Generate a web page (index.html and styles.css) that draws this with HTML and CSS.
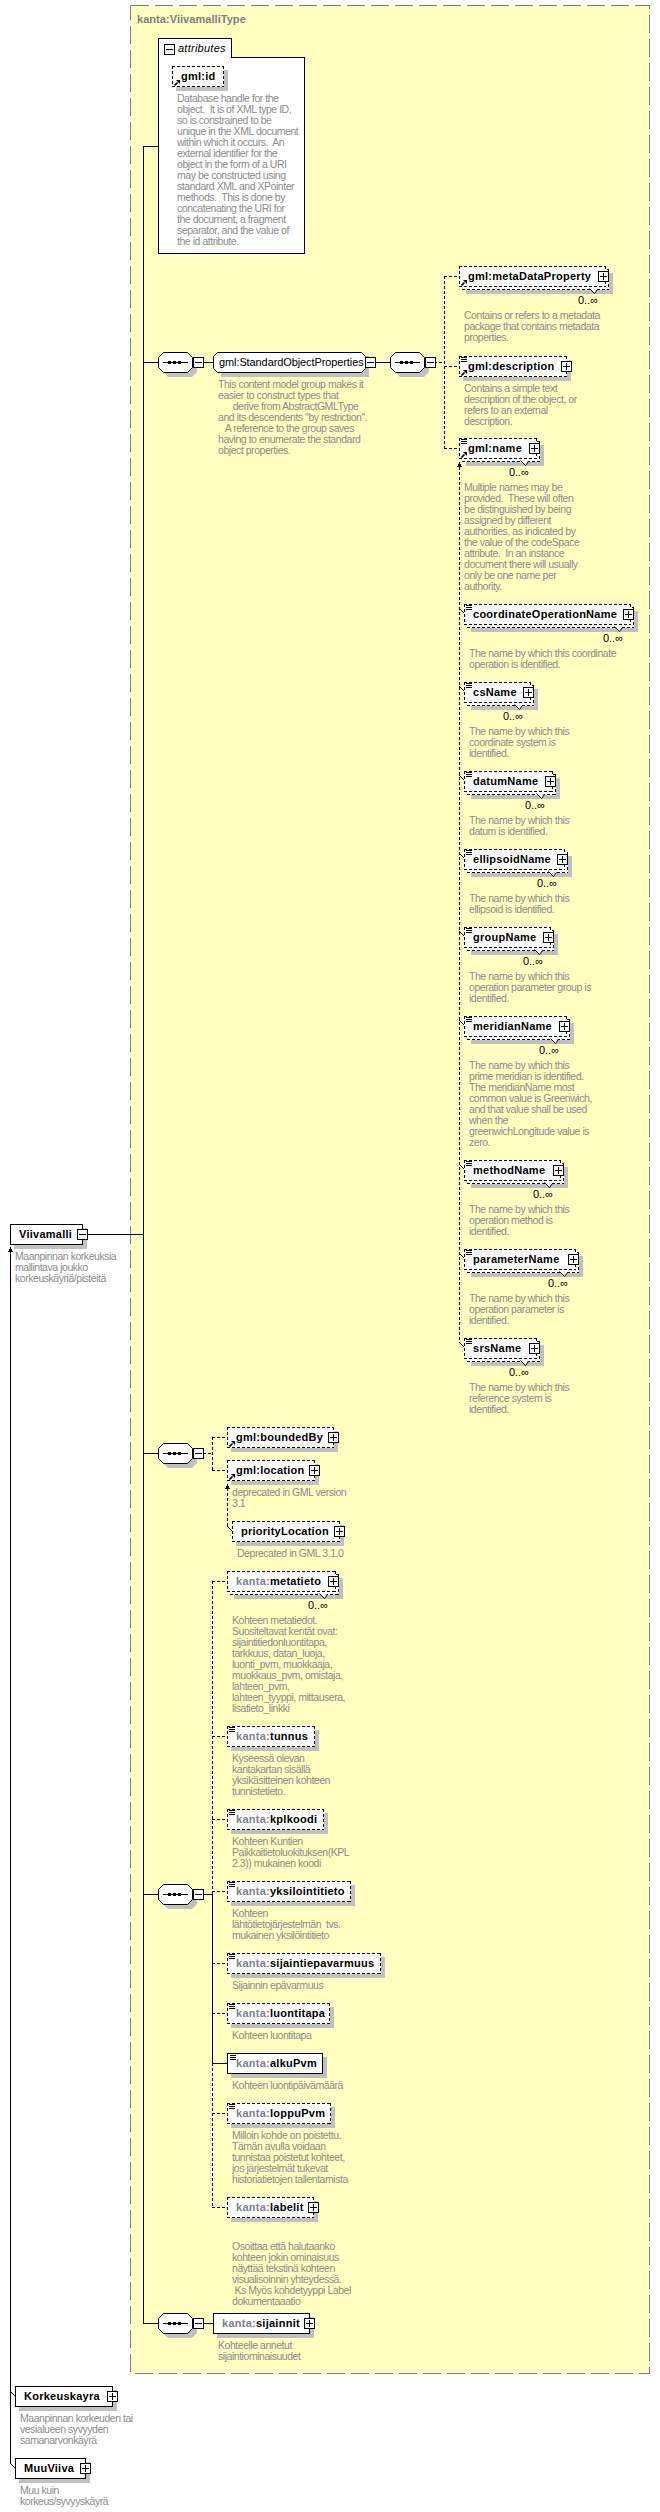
FILE: index.html
```html
<!DOCTYPE html>
<html lang="en">
<head>
<meta charset="utf-8">
<title>Viivamalli schema diagram</title>
<link rel="stylesheet" href="styles.css">
</head>
<body>
<svg class="defs" width="0" height="0" aria-hidden="true">
  <symbol id="oct" viewBox="0 0 40 26">
    <polygon class="oct-shadow" points="10,5 34,5 39,10 39,20 34,25 10,25 5,20 5,10"/>
    <polygon class="oct-face" points="5.5,0.5 29.5,0.5 34.5,5.5 34.5,15.5 29.5,20.5 5.5,20.5 0.5,15.5 0.5,5.5"/>
    <path class="oct-line" d="M5 10.5H30"/>
    <path class="oct-dots" d="M10 9h3v3h-3zM15 9h3v3h-3zM20 9h3v3h-3z"/>
  </symbol>
  <symbol id="link" viewBox="0 0 6 6">
    <path class="ico" d="M2 0H6V4Z"/>
    <path class="ico-line" d="M0.5 5.5L3.5 2.5"/>
  </symbol>
  <symbol id="tick" viewBox="0 0 9 6">
    <path class="tick-shape" d="M0.5 0.5L5.5 5.5L8.5 1.5"/>
  </symbol>
</svg>

<main class="canvas">
  <svg class="wires" width="660" height="2512" viewBox="0 0 660 2512" aria-hidden="true">
    <rect class="frame" x="130.5" y="5.5" width="519" height="2368"/>
    <path class="wire" d="M143.5 146V2323.5M143 146.5H158M87 1234.5H143M143 362.5H158M143 1453.5H158M143 1894.5H158M143 2323.5H158M203 362.5H213M376 362.5H390M203 2323.5H213M203 1894.5H212.5M212.5 1894V2063.5H227M10.5 1252V2463"/>
    <path class="wire" d="M10 2391L15 2396M10 2463L15 2468"/>
    <path class="wire-d" d="M434 362.5H444.5M444.5 276V448M444 276.5H459M444 366.5H459M444 448.5H459"/>
    <path class="wire-d" d="M459.5 467V1342"/>
    <path class="wire" d="M459 608L464 613M459 686L464 691M459 775L464 780M459 853L464 858M459 931L464 936M459 1020L464 1025M459 1164L464 1169M459 1253L464 1258M459 1342L464 1347"/>
    <path class="wire-d" d="M203 1453.5H212.5M212.5 1437V1470M212 1437.5H227M212 1470.5H227"/>
    <path class="wire-d" d="M227.5 1488V1526"/>
    <path class="wire" d="M227 1526L232 1531"/>
    <path class="wire-d" d="M212.5 1581V1894M212.5 2063V2207M212 1581.5H227M212 1736.5H227M212 1819.5H227M212 1891.5H227M212 1963.5H227M212 2013.5H227M212 2113.5H227M212 2207.5H227"/>
    <polygon class="head" points="10.5,1247 13,1252 8,1252"/>
    <polygon class="head" points="459.5,462 462,467 457,467"/>
    <polygon class="head" points="227.5,1484 230,1489 225,1489"/>
  </svg>

  <h1 class="type-name">kanta:ViivamalliType</h1>

  <section class="attrs">
    <div class="attrs-tab"><span class="minus static"></span><span class="attrs-label">attributes</span></div>
    <div class="attrs-body"></div>
  </section>

  <article class="item i-id">
    <div class="node"><div class="face dash">gml:id<svg class="link"><use href="#link"/></svg></div></div>
    <p class="desc">Database handle for the<br>object.  It is of XML type ID,<br>so is constrained to be<br>unique in the XML document<br>within which it occurs.  An<br>external identifier for the<br>object in the form of a URI<br>may be constructed using<br>standard XML and XPointer<br>methods.  This is done by<br>concatenating the URI for<br>the document, a fragment<br>separator, and the value of<br>the id attribute.</p>
  </article>

  <div class="seq s1"><svg class="oct"><use href="#oct"/></svg><span class="minus"></span></div>

  <article class="item i-group">
    <div class="group">
      <svg class="group-shape" width="158" height="26" viewBox="0 0 158 26">
        <polygon class="oct-shadow" points="8,4 156,4 156,25 8,25"/>
        <polygon class="oct-face" points="4.5,0.5 148.5,0.5 152.5,4.5 152.5,16.5 148.5,20.5 4.5,20.5 0.5,16.5 0.5,4.5"/>
      </svg>
      <span class="group-name">gml:StandardObjectProperties</span>
      <span class="minus"></span>
    </div>
    <p class="desc">This content model group makes it<br>easier to construct types that<br>      derive from AbstractGMLType<br>and its descendents "by restriction".<br>   A reference to the group saves<br>having to enumerate the standard<br>object properties.</p>
  </article>

  <div class="seq s2"><svg class="oct"><use href="#oct"/></svg><span class="minus"></span></div>

  <article class="item i-meta">
    <div class="node multi"><div class="face dash">gml:metaDataProperty<svg class="link"><use href="#link"/></svg></div><svg class="tick"><use href="#tick"/></svg><span class="plus"></span><span class="occurs">0..∞</span></div>
    <p class="desc">Contains or refers to a metadata<br>package that contains metadata<br>properties.</p>
  </article>

  <article class="item i-description">
    <div class="node"><div class="face dash">gml:description<i class="lines"></i><svg class="link"><use href="#link"/></svg></div><span class="plus"></span></div>
    <p class="desc">Contains a simple text<br>description of the object, or<br>refers to an external<br>description.</p>
  </article>

  <article class="item i-name">
    <div class="node multi"><div class="face dash">gml:name<i class="lines"></i><svg class="link"><use href="#link"/></svg></div><svg class="tick"><use href="#tick"/></svg><span class="plus"></span><span class="occurs">0..∞</span></div>
    <p class="desc">Multiple names may be<br>provided.  These will often<br>be distinguished by being<br>assigned by different<br>authorities, as indicated by<br>the value of the codeSpace<br>attribute.  In an instance<br>document there will usually<br>only be one name per<br>authority.</p>
  </article>

  <article class="item i-coord">
    <div class="node multi"><div class="face dash">coordinateOperationName<i class="lines"></i></div><svg class="tick"><use href="#tick"/></svg><span class="plus"></span><span class="occurs">0..∞</span></div>
    <p class="desc">The name by which this coordinate<br>operation is identified.</p>
  </article>

  <article class="item i-cs">
    <div class="node multi"><div class="face dash">csName<i class="lines"></i></div><svg class="tick"><use href="#tick"/></svg><span class="plus"></span><span class="occurs">0..∞</span></div>
    <p class="desc">The name by which this<br>coordinate system is<br>identified.</p>
  </article>

  <article class="item i-datum">
    <div class="node multi"><div class="face dash">datumName<i class="lines"></i></div><svg class="tick"><use href="#tick"/></svg><span class="plus"></span><span class="occurs">0..∞</span></div>
    <p class="desc">The name by which this<br>datum is identified.</p>
  </article>

  <article class="item i-ellipsoid">
    <div class="node multi"><div class="face dash">ellipsoidName<i class="lines"></i></div><svg class="tick"><use href="#tick"/></svg><span class="plus"></span><span class="occurs">0..∞</span></div>
    <p class="desc">The name by which this<br>ellipsoid is identified.</p>
  </article>

  <article class="item i-groupname">
    <div class="node multi"><div class="face dash">groupName<i class="lines"></i></div><svg class="tick"><use href="#tick"/></svg><span class="plus"></span><span class="occurs">0..∞</span></div>
    <p class="desc">The name by which this<br>operation parameter group is<br>identified.</p>
  </article>

  <article class="item i-meridian">
    <div class="node multi"><div class="face dash">meridianName<i class="lines"></i></div><svg class="tick"><use href="#tick"/></svg><span class="plus"></span><span class="occurs">0..∞</span></div>
    <p class="desc">The name by which this<br>prime meridian is identified.<br>The meridianName most<br>common value is Greenwich,<br>and that value shall be used<br>when the<br>greenwichLongitude value is<br>zero.</p>
  </article>

  <article class="item i-method">
    <div class="node multi"><div class="face dash">methodName<i class="lines"></i></div><svg class="tick"><use href="#tick"/></svg><span class="plus"></span><span class="occurs">0..∞</span></div>
    <p class="desc">The name by which this<br>operation method is<br>identified.</p>
  </article>

  <article class="item i-parameter">
    <div class="node multi"><div class="face dash">parameterName<i class="lines"></i></div><svg class="tick"><use href="#tick"/></svg><span class="plus"></span><span class="occurs">0..∞</span></div>
    <p class="desc">The name by which this<br>operation parameter is<br>identified.</p>
  </article>

  <article class="item i-srs">
    <div class="node multi"><div class="face dash">srsName<i class="lines"></i></div><svg class="tick"><use href="#tick"/></svg><span class="plus"></span><span class="occurs">0..∞</span></div>
    <p class="desc">The name by which this<br>reference system is<br>identified.</p>
  </article>

  <article class="item i-viiva">
    <div class="node"><div class="face solid">Viivamalli</div><span class="minus"></span></div>
    <p class="desc">Maanpinnan korkeuksia<br>mallintava joukko<br>korkeuskäyriä/pisteitä</p>
  </article>

  <div class="seq s3"><svg class="oct"><use href="#oct"/></svg><span class="minus"></span></div>

  <article class="item i-bounded">
    <div class="node"><div class="face dash">gml:boundedBy<svg class="link"><use href="#link"/></svg></div><span class="plus"></span></div>
  </article>

  <article class="item i-location">
    <div class="node"><div class="face dash">gml:location<svg class="link"><use href="#link"/></svg></div><span class="plus"></span></div>
    <p class="desc">deprecated in GML version<br>3.1</p>
  </article>

  <article class="item i-priority">
    <div class="node"><div class="face dash">priorityLocation</div><span class="plus"></span></div>
    <p class="desc">Deprecated in GML 3.1.0</p>
  </article>

  <article class="item i-metatieto">
    <div class="node multi"><div class="face dash"><span class="ns">kanta:</span>metatieto</div><svg class="tick"><use href="#tick"/></svg><span class="plus"></span><span class="occurs">0..∞</span></div>
    <p class="desc">Kohteen metatiedot.<br>Suositeltavat kentät ovat:<br>sijaintitiedonluontitapa,<br>tarkkuus, datan_luoja,<br>luonti_pvm, muokkaaja,<br>muokkaus_pvm, omistaja,<br>lahteen_pvm,<br>lahteen_tyyppi, mittausera,<br>lisatieto_linkki</p>
  </article>

  <article class="item i-tunnus">
    <div class="node"><div class="face dash"><span class="ns">kanta:</span>tunnus<i class="lines"></i></div></div>
    <p class="desc">Kyseessä olevan<br>kantakartan sisällä<br>yksikäsitteinen kohteen<br>tunnistetieto.</p>
  </article>

  <article class="item i-kpl">
    <div class="node"><div class="face dash"><span class="ns">kanta:</span>kplkoodi<i class="lines"></i></div></div>
    <p class="desc">Kohteen Kuntien<br>Paikkaitietoluokituksen(KPL<br>2.3)) mukainen koodi</p>
  </article>

  <div class="seq s4"><svg class="oct"><use href="#oct"/></svg><span class="minus"></span></div>

  <article class="item i-yksi">
    <div class="node"><div class="face dash"><span class="ns">kanta:</span>yksilointitieto<i class="lines"></i></div></div>
    <p class="desc">Kohteen<br>lähtötietojärjestelmän  tvs.<br>mukainen yksilöintitieto</p>
  </article>

  <article class="item i-sijainti">
    <div class="node"><div class="face dash"><span class="ns">kanta:</span>sijaintiepavarmuus<i class="lines"></i></div></div>
    <p class="desc">Sijainnin epävarmuus</p>
  </article>

  <article class="item i-luonti">
    <div class="node"><div class="face dash"><span class="ns">kanta:</span>luontitapa<i class="lines"></i></div></div>
    <p class="desc">Kohteen luontitapa</p>
  </article>

  <article class="item i-alku">
    <div class="node"><div class="face solid"><span class="ns">kanta:</span>alkuPvm<i class="lines"></i></div></div>
    <p class="desc">Kohteen luontipäivämäärä</p>
  </article>

  <article class="item i-loppu">
    <div class="node"><div class="face dash"><span class="ns">kanta:</span>loppuPvm<i class="lines"></i></div></div>
    <p class="desc">Milloin kohde on poistettu.<br>Tämän avulla voidaan<br>tunnistaa poistetut kohteet,<br>jos järjestelmät tukevat<br>historiatietojen tallentamista</p>
  </article>

  <article class="item i-labelit">
    <div class="node"><div class="face dash"><span class="ns">kanta:</span>labelit</div><span class="plus"></span></div>
    <p class="desc low">Osoittaa että halutaanko<br>kohteen jokin ominaisuus<br>näyttää tekstinä kohteen<br>visualisoinnin yhteydessä.<br> Ks Myös kohdetyyppi Label<br>dokumentaaatio</p>
  </article>

  <div class="seq s5"><svg class="oct"><use href="#oct"/></svg><span class="minus"></span></div>

  <article class="item i-sijainnit">
    <div class="node"><div class="face solid"><span class="ns">kanta:</span>sijainnit</div><span class="plus"></span></div>
    <p class="desc">Kohteelle annetut<br>sijaintiominaisuudet</p>
  </article>

  <article class="item i-korkeus">
    <div class="node"><div class="face solid">Korkeuskayra</div><span class="plus"></span></div>
    <p class="desc">Maanpinnan korkeuden tai<br>vesialueen syvyyden<br>samanarvonkäyrä</p>
  </article>

  <article class="item i-muu">
    <div class="node"><div class="face solid">MuuViiva</div><span class="plus"></span></div>
    <p class="desc">Muu kuin<br>korkeus/syvyyskäyrä</p>
  </article>
</main>
</body>
</html>
```
FILE: styles.css
```css
* { box-sizing: border-box; }
html, body { margin: 0; padding: 0; background: #fff; }
body { font-family: "Liberation Sans", Arial, sans-serif; font-size: 11px; color: #000; }
.defs { position: absolute; }
.canvas { position: relative; width: 660px; height: 2512px; overflow: hidden; }

.wires { position: absolute; left: 0; top: 0; shape-rendering: crispEdges; }
.frame { fill: #ffffc0; stroke: #808080; stroke-width: 1; stroke-dasharray: 18 6; }
.wire { fill: none; stroke: #000; stroke-width: 1; }
.wire-d { fill: none; stroke: #000; stroke-width: 1; stroke-dasharray: 3 2; }
.head { fill: #000; }

.type-name { position: absolute; left: 137px; top: 12px; margin: 0; font-size: 11px; line-height: 14px; font-weight: bold; color: #808080; letter-spacing: 0.05px; }

.attrs { position: absolute; left: 158px; top: 38px; width: 147px; height: 216px; }
.attrs-tab { position: absolute; left: 0; top: 0; width: 74px; height: 20px; background: #fff; border: 1px solid #000; border-bottom: 0; z-index: 1; }
.attrs-body { position: absolute; left: 0; top: 19px; width: 147px; height: 197px; background: #fff; border: 1px solid #000; }
.attrs-label { position: absolute; left: 19px; top: 3px; line-height: 13px; font-style: italic; letter-spacing: 0.25px; }

.item { position: absolute; }
.node { position: relative; width: var(--w); height: 21px; }
.face { position: relative; z-index: 1; height: 21px; padding-left: 9px; line-height: 21px; font-weight: bold; white-space: nowrap; letter-spacing: 0.26px; }
.node:not(.multi) .face { box-shadow: 4px 4px 0 #c0c0c0; }
.dash {
  --h: repeating-linear-gradient(90deg, #000 0 3px, transparent 3px 5px);
  --v: repeating-linear-gradient(180deg, #000 0 3px, transparent 3px 5px);
  background: var(--h) 0 0 / 100% 1px no-repeat, var(--h) 0 100% / 100% 1px no-repeat, var(--v) 0 0 / 1px 100% no-repeat, var(--v) 100% 0 / 1px 100% no-repeat, #fff;
}
.solid { background: #fff; border: 1px solid #000; padding-left: 8px; line-height: 19px; }
.multi::before {
  content: ""; position: absolute; left: 3px; top: 3px; width: 100%; height: 100%; z-index: 0;
  --h: repeating-linear-gradient(90deg, #000 0 3px, transparent 3px 5px);
  --v: repeating-linear-gradient(180deg, #000 0 3px, transparent 3px 5px);
  background: var(--h) 0 0 / 100% 1px no-repeat, var(--h) 0 100% / 100% 1px no-repeat, var(--v) 0 0 / 1px 100% no-repeat, var(--v) 100% 0 / 1px 100% no-repeat, #fff;
  box-shadow: 4px 4px 0 #c0c0c0;
}
.ns { color: #808090; }

.plus, .minus {
  position: absolute; right: -5px; top: 5px; z-index: 2; width: 11px; height: 11px; border: 1px solid #000;
}
.plus { background: linear-gradient(#000, #000) center / 7px 1px no-repeat, linear-gradient(#000, #000) center / 1px 7px no-repeat, #fff; }
.minus { background: linear-gradient(#000, #000) center / 7px 1px no-repeat, #fff; }
.multi .plus { right: -3px; }
.minus.static { left: 5px; right: auto; top: 5px; }

.lines { position: absolute; left: 2px; top: 1px; width: 6px; height: 5px; background: repeating-linear-gradient(180deg, #000 0 1px, #fff 1px 2px); }
.link { position: absolute; left: 2px; top: 14px; width: 6px; height: 6px; }
.ico { fill: #000; }
.ico-line { stroke: #000; stroke-width: 1.6; fill: none; }
.tick { position: absolute; right: 8px; top: 22px; z-index: 1; width: 9px; height: 6px; }
.tick-shape { fill: #fff; stroke: #000; stroke-width: 1; }
.occurs { position: absolute; right: 8px; top: 27px; z-index: 2; line-height: 14px; white-space: nowrap; }

.desc { margin: 6px 0 0; padding-left: 5px; font-size: 10.5px; line-height: 11px; color: #8c8c8c; white-space: pre; letter-spacing: -0.46px; }
.multi + .desc, .desc.low { margin-top: 23px; }

.seq { position: absolute; left: 158px; width: 46px; height: 26px; }
.oct { position: absolute; left: 0; top: 0; width: 40px; height: 26px; }
.seq .minus { left: 35px; right: auto; top: 5px; }
.oct-shadow { fill: #c0c0c0; }
.oct-face { fill: #fff; stroke: #000; stroke-width: 1; }
.oct-line { stroke: #000; stroke-width: 1; fill: none; }
.oct-dots { fill: #000; }
.s1 { top: 352px; }
.s2 { left: 390px; top: 352px; }
.s3 { top: 1443px; }
.s4 { top: 1884px; }
.s5 { top: 2313px; }

.group { position: relative; width: 153px; height: 21px; }
.group-shape { position: absolute; left: 0; top: 0; }
.group-name { position: absolute; left: 6px; top: 0; line-height: 21px; white-space: nowrap; letter-spacing: -0.1px; }
.group .minus { left: 152px; right: auto; }

.i-id { left: 172px; top: 66px; --w: 52px; }
.i-group { left: 213px; top: 352px; }
.i-meta { left: 459px; top: 266px; --w: 147px; }
.i-description { left: 459px; top: 356px; --w: 108px; }
.i-name { left: 459px; top: 438px; --w: 78px; }
.i-coord { left: 464px; top: 604px; --w: 167px; }
.i-cs { left: 464px; top: 682px; --w: 67px; }
.i-datum { left: 464px; top: 771px; --w: 89px; }
.i-ellipsoid { left: 464px; top: 849px; --w: 101px; }
.i-groupname { left: 464px; top: 927px; --w: 87px; }
.i-meridian { left: 464px; top: 1016px; --w: 103px; }
.i-method { left: 464px; top: 1160px; --w: 97px; }
.i-parameter { left: 464px; top: 1249px; --w: 112px; }
.i-srs { left: 464px; top: 1338px; --w: 73px; }
.i-viiva { left: 10px; top: 1224px; --w: 73px; }
.i-bounded { left: 227px; top: 1427px; --w: 107px; }
.i-location { left: 227px; top: 1460px; --w: 88px; }
.i-priority { left: 232px; top: 1521px; --w: 108px; }
.i-metatieto { left: 227px; top: 1571px; --w: 109px; }
.i-tunnus { left: 227px; top: 1726px; --w: 88px; }
.i-kpl { left: 227px; top: 1809px; --w: 97px; }
.i-yksi { left: 227px; top: 1881px; --w: 124px; }
.i-sijainti { left: 227px; top: 1953px; --w: 154px; }
.i-luonti { left: 227px; top: 2003px; --w: 103px; }
.i-alku { left: 227px; top: 2053px; --w: 96px; }
.i-loppu { left: 227px; top: 2103px; --w: 104px; }
.i-labelit { left: 227px; top: 2197px; --w: 87px; }
.i-sijainnit { left: 213px; top: 2313px; --w: 97px; }
.i-korkeus { left: 15px; top: 2386px; --w: 98px; }
.i-muu { left: 15px; top: 2458px; --w: 71px; }
```
